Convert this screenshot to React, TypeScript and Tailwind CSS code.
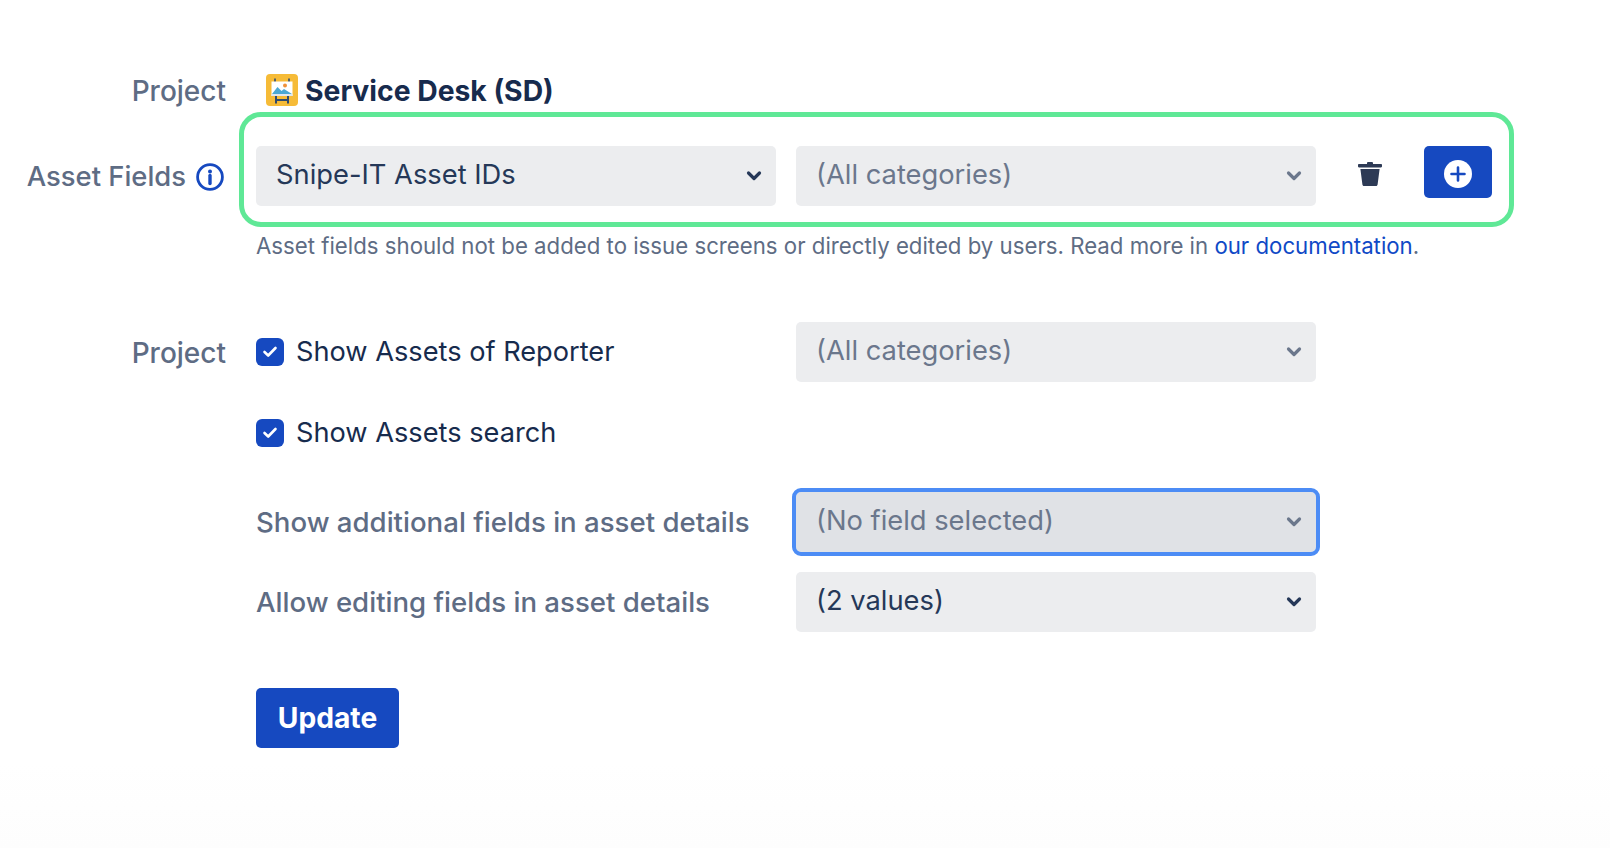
const FONT = "font-['Inter',sans-serif]";

function Chevron({ muted }: { muted?: boolean }) {
  return (
    <svg width="16" height="12" viewBox="0 0 16 12" className="shrink-0">
      <path
        d="M2.5 3 L8 8.5 L13.5 3"
        fill="none"
        stroke={muted ? "#6B778C" : "#253858"}
        strokeWidth="3.2"
        strokeLinecap="round"
        strokeLinejoin="round"
      />
    </svg>
  );
}

function Select({
  value,
  muted,
  focused,
  className,
}: {
  value: string;
  muted?: boolean;
  focused?: boolean;
  className: string;
}) {
  return (
    <div
      className={`flex h-[60px] items-center justify-between rounded-[5px] pl-[20px] pr-[14px] text-[27.3px] ${
        focused ? "bg-[#e0e2e6] outline-4 outline-[#4c8cf5] outline-offset-0" : "bg-[#ecedef]"
      } ${muted ? "text-[#6b778c]" : "text-[#253858]"} ${className}`}
    >
      <span className="pb-[2px]">{value}</span>
      <Chevron muted={muted} />
    </div>
  );
}

function Checkbox({ label }: { label: string }) {
  return (
    <div className="flex items-center gap-[12px] text-[27.2px] text-[#172b4d]">
      <span className="flex h-[28px] w-[28px] items-center justify-center rounded-[6px] bg-[#1649c0]">
        <svg width="16" height="14" viewBox="0 0 16 14">
          <path
            d="M2.5 7 L6.2 10.5 L13.5 3"
            fill="none"
            stroke="#fff"
            strokeWidth="2.6"
            strokeLinecap="round"
            strokeLinejoin="round"
          />
        </svg>
      </span>
      <span className="pt-[1px]">{label}</span>
    </div>
  );
}

function ProjectIcon() {
  return (
    <svg width="32" height="32" viewBox="0 0 32 32" className="shrink-0">
      <rect width="32" height="32" rx="4" fill="#f6bb37" />
      <path d="M9 4.5v4M23 4.5v4" stroke="#2f4a6d" strokeWidth="1.6" />
      <rect x="5.5" y="7.5" width="21" height="14.5" fill="#fff" />
      <rect x="5.5" y="20" width="21" height="2" fill="#dfe7ee" />
      <circle cx="19" cy="11.5" r="2" fill="#f0913a" />
      <path d="M6 20 L11.5 13 L15.5 17 L18 15 L26 20 Z" fill="#4ba8d3" />
      <path d="M10 22v7.5M22 22v7.5M10 26h12" stroke="#2f4a6d" strokeWidth="2" fill="none" />
    </svg>
  );
}

function InfoIcon() {
  return (
    <svg width="28" height="28" viewBox="0 0 28 28" className="shrink-0">
      <circle cx="14" cy="14" r="12.4" fill="none" stroke="#1649c0" strokeWidth="2.8" />
      <circle cx="14" cy="8.6" r="2" fill="#1649c0" />
      <path d="M14 12.5v8" stroke="#1649c0" strokeWidth="3.4" strokeLinecap="round" />
    </svg>
  );
}

function TrashIcon() {
  return (
    <svg width="24" height="24" viewBox="0 0 24 24" className="shrink-0">
      <path d="M9 1.2 C9 0.5 9.5 0 10.2 0 H13.8 C14.5 0 15 0.5 15 1.2 V2 H23 C23.6 2 24 2.5 24 3 V4 C24 5 23.6 5.4 23 5.4 H1 C0.4 5.4 0 5 0 4 V3 C0 2.5 0.4 2 1 2 H9 Z" fill="#2d3a55" />
      <path d="M2.4 7 H21.6 L19.6 22.5 C19.5 23.4 18.9 24 18 24 H6 C5.1 24 4.5 23.4 4.4 22.5 Z" fill="#2d3a55" />
    </svg>
  );
}

function PlusIcon() {
  return (
    <svg width="28" height="28" viewBox="0 0 28 28">
      <circle cx="14" cy="14" r="14" fill="#fff" />
      <path d="M14 7.5v13M7.5 14h13" stroke="#1649c0" strokeWidth="2.6" strokeLinecap="round" />
    </svg>
  );
}

export default function App() {
  return (
    <div className={`${FONT} min-h-screen w-full bg-linear-to-b from-white from-90% to-[#fdfdfd] pt-[74px]`}>
      <div className="flex h-[32px] items-center">
        <div className="w-[226px] pt-[2px] text-right text-[28px] font-medium text-[#5e6c84]">Project</div>
        <div className="ml-[40px] flex items-center gap-[7px]">
          <ProjectIcon />
          <span className="pt-[2px] text-[28.3px] font-bold text-[#172b4d]">Service Desk (SD)</span>
        </div>
      </div>

      <div className="mt-[6px] flex items-start">
        <div className="mt-[44px] flex w-[224px] items-center justify-end gap-[10px] text-[27.4px] font-medium text-[#5e6c84]">
          <span>Asset Fields</span>
          <InfoIcon />
        </div>
        <div className="ml-[15px] flex h-[115px] w-[1275px] items-start rounded-[22px] border-[5px] border-[#5fe896] pl-[12px] pt-[29px]">
          <Select value="Snipe-IT Asset IDs" className="w-[520px]" />
          <Select value="(All categories)" muted className="ml-[20px] w-[520px]" />
          <div className="ml-[42px] mt-[16px]">
            <TrashIcon />
          </div>
          <div className="ml-[42px] flex h-[52px] w-[68px] items-center justify-center rounded-[5px] bg-[#1649c0] pt-[3px]">
            <PlusIcon />
          </div>
        </div>
      </div>

      <p className="ml-[256px] mt-[2px] text-[22.22px] text-[#5e6c84]">
        Asset fields should not be added to issue screens or directly edited by users. Read more in{" "}
        <span className="text-[#0f49c6]">our documentation</span>.
      </p>

      <div className="mt-[60px] flex items-start">
        <div className="mt-[10px] w-[226px] text-right text-[28px] font-medium text-[#5e6c84]">Project</div>
        <div className="ml-[30px]">
          <div className="flex items-center">
            <div className="w-[540px]">
              <Checkbox label="Show Assets of Reporter" />
            </div>
            <Select value="(All categories)" muted className="w-[520px]" />
          </div>
          <div className="mt-[30px]">
            <Checkbox label="Show Assets search" />
          </div>
          <div className="mt-[38px] flex items-center">
            <div className="w-[540px] pt-[2px] text-[27.6px] font-medium text-[#5e6c84]">
              Show additional fields in asset details
            </div>
            <Select value="(No field selected)" muted focused className="w-[520px]" />
          </div>
          <div className="mt-[20px] flex items-center">
            <div className="w-[540px] pt-[2px] text-[27.6px] font-medium text-[#5e6c84]">
              Allow editing fields in asset details
            </div>
            <Select value="(2 values)" className="w-[520px]" />
          </div>
          <button className="mt-[56px] h-[60px] w-[143px] rounded-[5px] bg-[#1649c0] text-[28.2px] font-bold text-white">
            Update
          </button>
        </div>
      </div>
    </div>
  );
}
